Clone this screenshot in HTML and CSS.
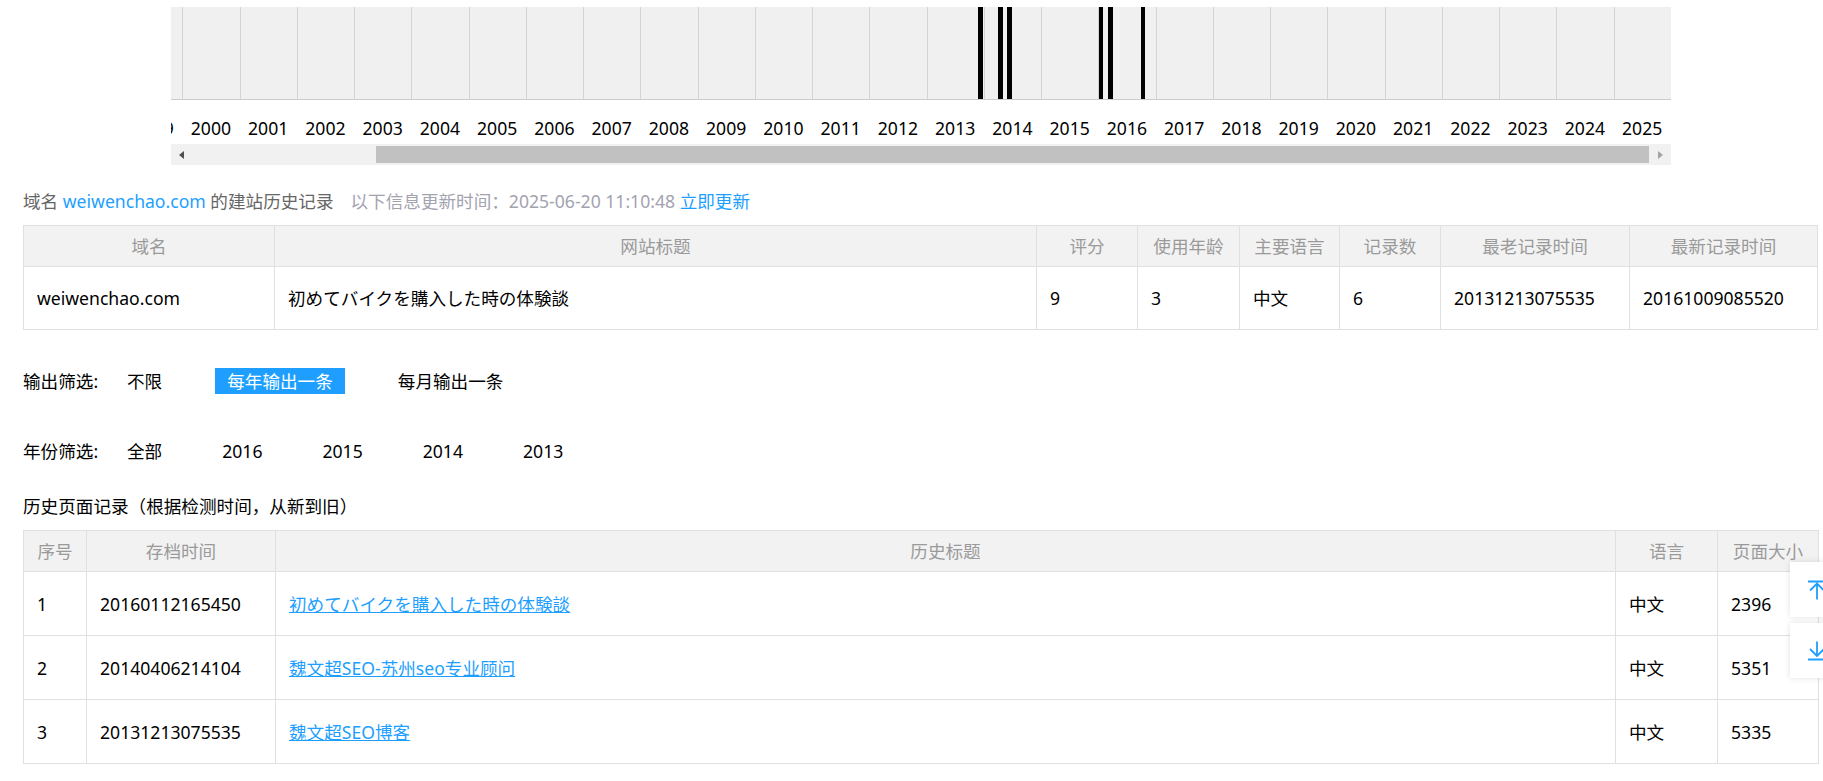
FILE: index.html
```html
<!DOCTYPE html>
<html lang="zh-CN">
<head>
<meta charset="utf-8">
<title>weiwenchao.com 的建站历史记录</title>
<link rel="stylesheet" href="styles.css">
</head>
<body>
<div class="page">
  <div class="timeline">
    <div class="tl-plot">
      <div class="tl-strip">
        <div class="tl-cell"></div><div class="tl-cell"></div><div class="tl-cell"></div><div class="tl-cell"></div><div class="tl-cell"></div><div class="tl-cell"></div><div class="tl-cell"></div><div class="tl-cell"></div><div class="tl-cell"></div><div class="tl-cell"></div><div class="tl-cell"></div><div class="tl-cell"></div><div class="tl-cell"></div><div class="tl-cell"></div><div class="tl-cell"></div><div class="tl-cell"></div><div class="tl-cell"></div><div class="tl-cell"></div><div class="tl-cell"></div><div class="tl-cell"></div><div class="tl-cell"></div><div class="tl-cell"></div><div class="tl-cell"></div><div class="tl-cell"></div><div class="tl-cell"></div><div class="tl-cell"></div><div class="tl-cell"></div>
      </div>
      <span class="tl-bar" style="left:807px"></span>
      <span class="tl-bar" style="left:827px"></span>
      <span class="tl-bar" style="left:836px"></span>
      <span class="tl-bar tl-bar-thin" style="left:928px"></span>
      <span class="tl-bar" style="left:937px"></span>
      <span class="tl-bar tl-bar-thin" style="left:970px"></span>
    </div>
    <div class="tl-labels">
      <div class="tl-strip">
        <span class="tl-year">1999</span><span class="tl-year">2000</span><span class="tl-year">2001</span><span class="tl-year">2002</span><span class="tl-year">2003</span><span class="tl-year">2004</span><span class="tl-year">2005</span><span class="tl-year">2006</span><span class="tl-year">2007</span><span class="tl-year">2008</span><span class="tl-year">2009</span><span class="tl-year">2010</span><span class="tl-year">2011</span><span class="tl-year">2012</span><span class="tl-year">2013</span><span class="tl-year">2014</span><span class="tl-year">2015</span><span class="tl-year">2016</span><span class="tl-year">2017</span><span class="tl-year">2018</span><span class="tl-year">2019</span><span class="tl-year">2020</span><span class="tl-year">2021</span><span class="tl-year">2022</span><span class="tl-year">2023</span><span class="tl-year">2024</span><span class="tl-year">2025</span>
      </div>
    </div>
    <div class="tl-scroll">
      <span class="sb-arrow sb-left"></span>
      <span class="sb-thumb"></span>
      <span class="sb-arrow sb-right"></span>
    </div>
  </div>

  <p class="info">域名 <a class="blue" href="#">weiwenchao.com</a> 的建站历史记录<span class="muted">以下信息更新时间：2025-06-20 11:10:48</span> <a class="blue" href="#">立即更新</a></p>

  <table class="grid summary">
    <colgroup>
      <col style="width:251px"><col style="width:762px"><col style="width:101px"><col style="width:102px"><col style="width:100px"><col style="width:101px"><col style="width:189px"><col style="width:188px">
    </colgroup>
    <thead>
      <tr><th>域名</th><th>网站标题</th><th>评分</th><th>使用年龄</th><th>主要语言</th><th>记录数</th><th>最老记录时间</th><th>最新记录时间</th></tr>
    </thead>
    <tbody>
      <tr><td>weiwenchao.com</td><td>初めてバイクを購入した時の体験談</td><td>9</td><td>3</td><td>中文</td><td>6</td><td>20131213075535</td><td>20161009085520</td></tr>
    </tbody>
  </table>

  <div class="filter filter-out">
    <span class="filter-label">输出筛选:</span>
    <a class="filter-item" href="#">不限</a>
    <a class="filter-item active" href="#">每年输出一条</a>
    <a class="filter-item" href="#">每月输出一条</a>
  </div>

  <div class="filter filter-year">
    <span class="filter-label">年份筛选:</span>
    <a class="filter-item" href="#">全部</a>
    <a class="filter-item" href="#">2016</a>
    <a class="filter-item" href="#">2015</a>
    <a class="filter-item" href="#">2014</a>
    <a class="filter-item" href="#">2013</a>
  </div>

  <p class="section-title">历史页面记录（根据检测时间，从新到旧）</p>

  <table class="grid history">
    <colgroup>
      <col style="width:63px"><col style="width:189px"><col style="width:1340px"><col style="width:102px"><col style="width:101px">
    </colgroup>
    <thead>
      <tr><th>序号</th><th>存档时间</th><th>历史标题</th><th>语言</th><th>页面大小</th></tr>
    </thead>
    <tbody>
      <tr><td>1</td><td>20160112165450</td><td><a class="blue link" href="#">初めてバイクを購入した時の体験談</a></td><td>中文</td><td>2396</td></tr>
      <tr><td>2</td><td>20140406214104</td><td><a class="blue link" href="#">魏文超SEO-苏州seo专业顾问</a></td><td>中文</td><td>5351</td></tr>
      <tr><td>3</td><td>20131213075535</td><td><a class="blue link" href="#">魏文超SEO博客</a></td><td>中文</td><td>5335</td></tr>
    </tbody>
  </table>
</div>

<div class="fixbar">
  <a class="fixbar-btn" href="#" title="返回顶部">
    <svg viewBox="0 0 20 20" width="20" height="20"><path d="M1 1.5H19M3 10.5L10 3.5L17 10.5M10 3.5V19.5" fill="none" stroke="#1e9fff" stroke-width="1.8"/></svg>
  </a>
  <a class="fixbar-btn" href="#" title="到底部">
    <svg viewBox="0 0 20 20" width="20" height="20"><path d="M10 0.5V15M3 8L10 15L17 8M1 18.5H19" fill="none" stroke="#1e9fff" stroke-width="1.8"/></svg>
  </a>
</div>
</body>
</html>
```

FILE: styles.css
```css
html, body {
  margin: 0;
  padding: 0;
  background: #fff;
}
body {
  font-family: "Noto Sans", "Noto Sans CJK SC", sans-serif;
  font-size: 17.6px;
  color: #000;
  overflow: hidden;
}
a { text-decoration: none; }

.page {
  padding: 7px 0 0 23px;
  width: 1795px;
}

/* ---------- timeline ---------- */
.timeline {
  margin-left: 148px;
  width: 1500px;
}
.tl-plot {
  position: relative;
  height: 92px;
  background: #f0f0f0;
  border-bottom: 1px solid #cbcbcb;
  overflow: hidden;
}
.tl-strip {
  display: flex;
  margin-left: -45.95px;
  height: 100%;
}
.tl-cell {
  flex: 0 0 57.25px;
  box-sizing: border-box;
  border-left: 1px solid #d4d4d4;
}
.tl-bar {
  position: absolute;
  top: 0;
  bottom: 0;
  width: 5px;
  background: #000;
}
.tl-bar-thin { width: 4px; }
.tl-labels {
  height: 44px;
  overflow: hidden;
}
.tl-year {
  flex: 0 0 57.25px;
  text-align: center;
  line-height: 22px;
  padding-top: 17px;
}
.tl-scroll {
  position: relative;
  height: 21px;
  background: #f1f1f1;
}
.sb-thumb {
  position: absolute;
  left: 205px;
  width: 1273px;
  top: 2px;
  height: 17px;
  background: #c1c1c1;
}
.sb-arrow {
  position: absolute;
  top: 7px;
  width: 0;
  height: 0;
  border-top: 4px solid transparent;
  border-bottom: 4px solid transparent;
}
.sb-left {
  left: 8px;
  border-right: 5px solid #505050;
}
.sb-right {
  right: 8px;
  border-left: 5px solid #a3a3a3;
}

/* ---------- info line ---------- */
.info {
  margin: 23px 0 0;
  line-height: 26px;
  color: #666;
}
.blue { color: #1e9fff; }
.muted {
  color: #a3a3b0;
  margin-left: 17px;
}

/* ---------- tables ---------- */
.grid {
  width: 1795px;
  table-layout: fixed;
  border-collapse: collapse;
  margin-top: 11px;
}
.grid th,
.grid td {
  border: 1px solid #e0e0e0;
  padding: 0 13px;
  line-height: 22px;
  white-space: nowrap;
  overflow: hidden;
}
.grid th {
  height: 40px;
  background: #f2f2f2;
  color: #9a9a9a;
  font-weight: normal;
  text-align: center;
}
.grid td {
  height: 62px;
  text-align: left;
}
.history td { height: 63px; }
.link { text-decoration: underline; }

/* ---------- filters ---------- */
.filter {
  display: flex;
  align-items: center;
  height: 26px;
  line-height: 26px;
}
.filter-out { margin-top: 38px; gap: 41px; }
.filter-year { margin-top: 44px; gap: 36px; }
.filter-label {
  width: 92px;
  margin-right: -41px;
}
.filter-year .filter-label { margin-right: -36px; }
.filter-item {
  color: #000;
  padding: 0 12px;
}
.filter-item.active {
  background: #1e9fff;
  color: #fff;
}

.section-title {
  margin: 29px 0 0;
  line-height: 26px;
}

/* ---------- fixed side bar ---------- */
.fixbar {
  position: fixed;
  left: 1790px;
  top: 562px;
  display: flex;
  flex-direction: column;
  gap: 6px;
}
.fixbar-btn {
  display: flex;
  align-items: center;
  justify-content: center;
  width: 54px;
  height: 55px;
  background: #fff;
  box-shadow: 0 0 6px rgba(0, 0, 0, 0.12);
}
.fixbar-btn svg { display: block; }
```
